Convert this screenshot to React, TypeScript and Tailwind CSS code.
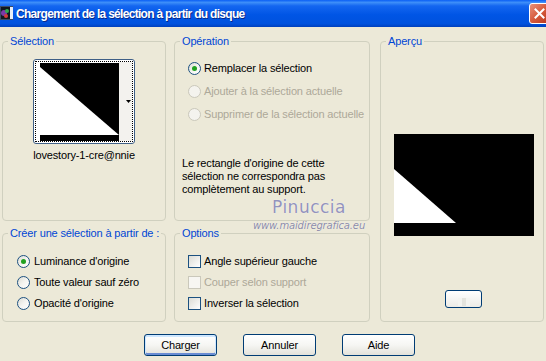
import React from 'react';

function Radio({ checked, disabled }: { checked?: boolean; disabled?: boolean }) {
  return (
    <span
      className={
        'flex h-[13px] w-[13px] shrink-0 items-center justify-center rounded-full border ' +
        (disabled
          ? 'border-[#CAC8BB] bg-[#F4F3EE]'
          : 'border-[#1C5180] bg-linear-to-br from-[#DCDCD5] via-[#F4F4F0] to-white')
      }
    >
      {checked && <span className="h-[5px] w-[5px] rounded-full bg-[#21A121]" />}
    </span>
  );
}

function Check({ disabled }: { disabled?: boolean }) {
  return (
    <span
      className={
        'block h-[13px] w-[13px] shrink-0 border ' +
        (disabled ? 'border-[#CAC8BB] bg-[#F7F6F2]' : 'border-[#1C5180] bg-linear-to-br from-[#DCDCD5] to-white')
      }
    />
  );
}

function Group({ title, className, children }: { title: string; className: string; children?: React.ReactNode }) {
  return (
    <fieldset className={'rounded-[4px] border border-[#D0D0BF] ' + className}>
      <legend className="ml-[5px] whitespace-nowrap px-[2px] leading-[13px] text-[#0046D5]">{title}</legend>
      {children}
    </fieldset>
  );
}

function Button({ label, primary }: { label: string; primary?: boolean }) {
  return (
    <button
      className={
        'h-[22px] w-[73px] rounded-[3px] border border-[#003C74] bg-linear-to-b from-white via-[#F6F6F3] to-[#E3E2DA] text-[11px] leading-none ' +
        (primary ? 'shadow-[inset_0_1px_0_1px_#CEE7FF,inset_0_-1px_0_1px_#6A8CD3]' : '')
      }
    >
      {label}
    </button>
  );
}

function Thumbnail() {
  return (
    <div className="mt-[11px] flex h-[85px] w-[102px] rounded-[3px] border border-[#3F5F86] bg-white p-[1px]">
      <div className="flex-1 border border-dotted border-black">
        <svg width="96" height="79" viewBox="0 0 96 79">
          <rect x="4" y="1" width="79" height="72" fill="#000" />
          <polygon points="4,5 4,73 83,73" fill="#fff" />
          <rect x="4" y="73" width="79" height="6" fill="#000" />
          <rect x="83" y="0" width="13" height="79" fill="#F3F2EE" />
          <polygon points="90,38 95,38 92.5,41" fill="#000" />
        </svg>
      </div>
    </div>
  );
}

const Row = ({ children, className = '' }: { children: React.ReactNode; className?: string }) => (
  <div className={'flex items-center whitespace-nowrap ' + className}>{children}</div>
);

export default function App() {
  return (
    <div className="relative h-[361px] w-[546px] overflow-hidden bg-[#ECE9D8] font-['Liberation_Sans',Arial,sans-serif] text-[11px] tracking-[-0.15px] text-black">
      <div className="flex h-[27px] items-center bg-[linear-gradient(to_bottom,#0A5FF5_0%,#3D8EF9_9%,#1466F0_22%,#0055E5_55%,#0052DE_88%,#0040BC_100%)]">
        <svg width="14" height="15" viewBox="0 0 14 15" className="mr-[2px] shrink-0">
          <rect x="0" y="0" width="13" height="14" fill="#3A4A66" />
          <rect x="1" y="1" width="11" height="12" fill="#101820" />
          <circle cx="4" cy="7" r="3" fill="#7A3AA8" />
          <circle cx="7" cy="5" r="2" fill="#2FA84A" />
          <circle cx="6" cy="10" r="2" fill="#D43A3A" />
          <rect x="10" y="1" width="3" height="12" fill="#E8EEF8" />
        </svg>
        <span className="whitespace-nowrap text-[12px] font-bold tracking-[-0.7px] text-white [text-shadow:1px_1px_0_#0A2A8A]">
          Chargement de la sélection à partir du disque
        </span>
        <div className="ml-auto mr-[-4px] flex h-[21px] w-[21px] items-center justify-center rounded-[3px] border border-white bg-linear-to-br from-[#E8907A] via-[#D65A3C] to-[#B8351A]">
          <svg width="11" height="11" viewBox="0 0 11 11">
            <path d="M1.5 1.5 L9.5 9.5 M9.5 1.5 L1.5 9.5" stroke="#fff" strokeWidth="2" strokeLinecap="square" />
          </svg>
        </div>
      </div>

      <div className="flex pl-[2px] pt-[8px]">
        <div className="flex w-[164px] flex-col gap-[6px]">
          <Group title="Sélection" className="flex h-[186px] flex-col items-center">
            <Thumbnail />
            <div className="mt-[5px] whitespace-nowrap leading-[13px]">lovestory-1-cre@nnie</div>
          </Group>
          <Group title="Créer une sélection à partir de :" className="h-[95px]">
            <div className="mt-[11px] flex flex-col pl-[14px]">
              <Row className="h-[21px] gap-[4px]">
                <Radio checked />
                <span>Luminance d'origine</span>
              </Row>
              <Row className="h-[21px] gap-[4px]">
                <Radio />
                <span>Toute valeur sauf zéro</span>
              </Row>
              <Row className="h-[21px] gap-[4px]">
                <Radio />
                <span>Opacité d'origine</span>
              </Row>
            </div>
          </Group>
        </div>

        <div className="ml-[8px] flex w-[196px] flex-col gap-[6px]">
          <Group title="Opération" className="h-[186px]">
            <div className="mt-[9px] flex flex-col pl-[13px]">
              <Row className="h-[23px] gap-[3px]">
                <Radio checked />
                <span>Remplacer la sélection</span>
              </Row>
              <Row className="h-[23px] gap-[3px] text-[#ACA899]">
                <Radio disabled />
                <span>Ajouter à la sélection actuelle</span>
              </Row>
              <Row className="h-[23px] gap-[3px] text-[#ACA899]">
                <Radio disabled />
                <span>Supprimer de la sélection actuelle</span>
              </Row>
            </div>
            <p className="mt-[31px] whitespace-nowrap pl-[7px] leading-[13px]">
              Le rectangle d'origine de cette
              <br />
              sélection ne correspondra pas
              <br />
              complètement au support.
            </p>
          </Group>
          <Group title="Options" className="h-[95px]">
            <div className="mt-[11px] flex flex-col pl-[13px]">
              <Row className="h-[21px] gap-[3px]">
                <Check />
                <span>Angle supérieur gauche</span>
              </Row>
              <Row className="h-[21px] gap-[3px] text-[#ACA899]">
                <Check disabled />
                <span>Couper selon support</span>
              </Row>
              <Row className="h-[21px] gap-[3px]">
                <Check />
                <span>Inverser la sélection</span>
              </Row>
            </div>
          </Group>
        </div>

        <div className="ml-[10px] w-[164px]">
          <Group title="Aperçu" className="flex h-[287px] flex-col items-center">
            <svg width="140" height="102" viewBox="0 0 140 102" className="ml-[3px] mt-[86px]">
              <rect width="140" height="102" fill="#000" />
              <polygon points="0,35 0,89 62,89" fill="#fff" />
            </svg>
            <div className="ml-[3px] mt-[54px] flex h-[18px] w-[37px] items-end justify-center rounded-[3px] border border-[#003C74] bg-linear-to-b from-white to-[#ECEBE6]">
              <div className="mb-[1px] grid h-[8px] w-[12px] grid-cols-3">
                <span className="bg-[#F4F4F0]" />
                <span className="bg-[#E4E4DE]" />
                <span className="bg-[#F4F4F0]" />
              </div>
            </div>
          </Group>
        </div>
      </div>

      <div className="mt-[12px] flex gap-[26px] pl-[144px]">
        <Button label="Charger" primary />
        <Button label="Annuler" />
        <Button label="Aide" />
      </div>

      <div className="pointer-events-none absolute left-[256px] top-[197px] flex w-[106px] flex-col items-center">
        <span className="font-['DejaVu_Sans',sans-serif] text-[17px] leading-[20px] tracking-[0.5px] text-[#9393BC] [text-shadow:0_0_1px_#fff]">
          Pinuccia
        </span>
        <span className="mt-[3px] font-['DejaVu_Sans',sans-serif] text-[10px] italic leading-[12px] text-[#8C8CA8] [text-shadow:0_0_1px_#fff]">
          www.maidiregrafica.eu
        </span>
      </div>
    </div>
  );
}
